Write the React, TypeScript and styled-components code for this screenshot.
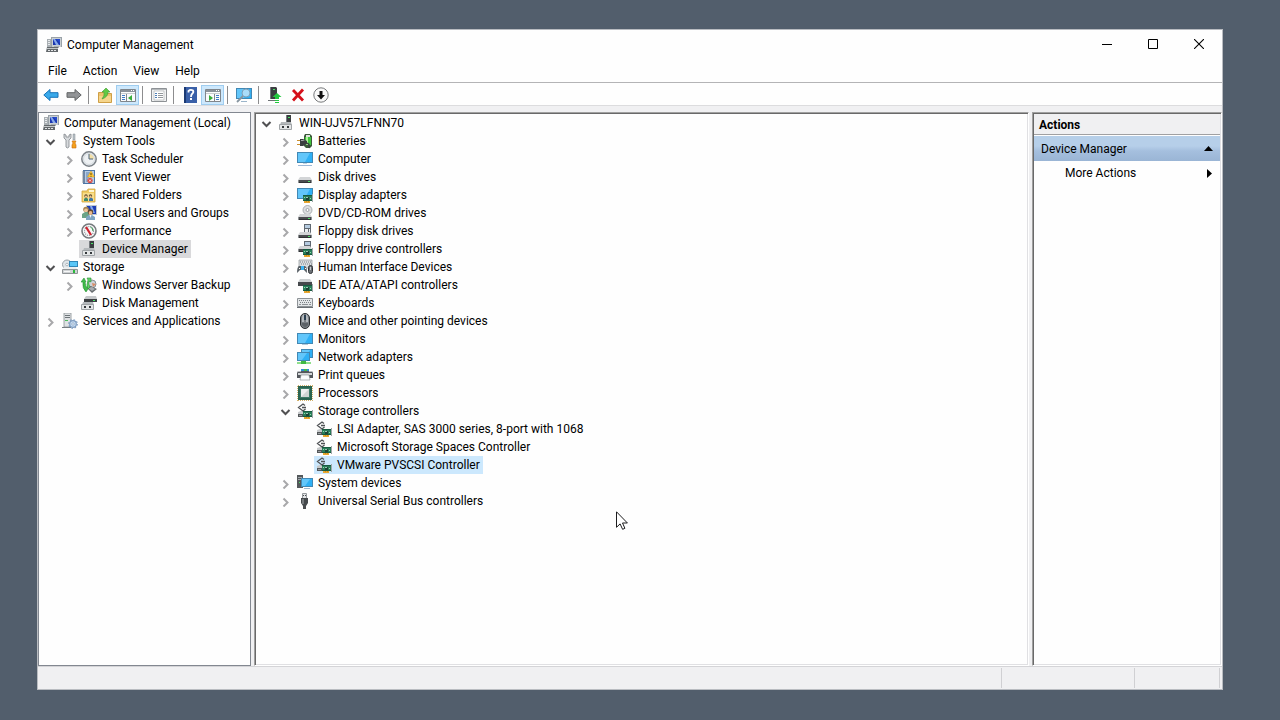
import React, { useState } from "react";
import styled, { createGlobalStyle, css } from "styled-components";

const GlobalStyle = createGlobalStyle`
  *, *::before, *::after { box-sizing: border-box; }
  body {
    margin: 0;
    background: #525e6c;
    color: #000;
    font: 12px/18px Roboto, "Open Sans", sans-serif;
  }
  button {
    margin: 0;
    padding: 0;
    border: 0;
    background: none;
    color: inherit;
    font: inherit;
  }
  ul { margin: 0; padding: 0; list-style: none; }
`;

const Desktop = styled.div`
  display: flex;
  min-height: 100vh;
  padding: 29px 57px 30px 37px;
`;

const Window = styled.main`
  flex: 1;
  min-width: 0;
  display: flex;
  flex-direction: column;
  background: #f0f0f2;
  border: 1px solid #b9bcc1;
`;

const TitleBar = styled.header`
  display: flex;
  align-items: center;
  height: 30px;
  padding-left: 8px;
  background: #fefefe;
`;

const Title = styled.h1`
  flex: 1;
  margin: 0 0 0 5px;
  font-size: 12px;
  font-weight: 400;
`;

const CaptionButton = styled.button`
  display: grid;
  place-items: center;
  width: 46px;
  height: 30px;
  padding-bottom: 2px;
`;

const MenuBar = styled.nav`
  display: flex;
  height: 23px;
  padding-left: 2px;
  background: #fefefe;
  border-bottom: 1px solid #b4b4b6;
`;

const MenuButton = styled.button`
  padding: 0 8px;
`;

const Toolbar = styled.div`
  display: flex;
  align-items: center;
  height: 23px;
  padding: 2px 0 0 1px;
  background: #fefefe;
  border-bottom: 1px solid #dcdcde;
`;

const ToolButton = styled.button<{ $pressed?: boolean }>`
  display: grid;
  place-items: center;
  width: 23px;
  height: 20px;
  ${(p) =>
    p.$pressed &&
    css`
      background: #cde8fc;
      box-shadow: inset 0 0 0 1px #9fcdf0;
    `}
`;

const ToolDivider = styled.span`
  width: 1px;
  height: 18px;
  margin: 0 4px 0 3px;
  background: #8c8c8e;
`;

const Panes = styled.div`
  flex: 1;
  display: grid;
  grid-template-columns: 213px minmax(0, 1fr) 190px;
  gap: 3px;
  padding-top: 6px;
`;

const ConsolePane = styled.nav`
  padding: 1px 2px;
  background: #fefefe;
  border: 1px solid #828790;
`;

const SunkenPane = styled.section`
  padding: 1px 2px 2px 2px;
  background: #fefefe;
  border: 1px solid;
  border-color: #a0a0a0 #fff #fff #a0a0a0;
  box-shadow: inset 1px 1px 0 #696969, inset -1px -1px 0 #e0e0e3;
`;

const ActionsPane = styled(SunkenPane).attrs({ as: "aside" })`
  padding: 1px;
`;

const Branch = styled.ul<{ $nested?: boolean }>`
  padding-left: ${(p) => (p.$nested ? 19 : 0)}px;
`;

const Row = styled.div`
  display: flex;
  height: 18px;
`;

const Expander = styled.button`
  display: grid;
  place-items: center;
  width: 19px;
  height: 18px;
`;

const ExpanderGap = styled.span`
  width: 19px;
`;

const NodeButton = styled.button<{ $tone?: "grey" | "blue" }>`
  display: flex;
  align-items: center;
  gap: 5px;
  padding: 0 3px 0 2px;
  white-space: nowrap;
  background: ${(p) =>
    p.$tone === "grey" ? "#d9d9db" : p.$tone === "blue" ? "#cce8fd" : "none"};
`;

const ActionsTitle = styled.h2`
  margin: 0;
  height: 21px;
  padding: 2px 5px 0;
  background: #f0f0f2;
  border-bottom: 1px solid #a0a0a2;
  font-size: 12px;
  line-height: 18px;
  font-weight: 700;
`;

const ActionButton = styled.button<{ $heading?: boolean }>`
  display: flex;
  align-items: center;
  justify-content: space-between;
  width: 100%;
  height: 24px;
  padding: 0 8px 0 31px;
  ${(p) =>
    p.$heading &&
    css`
      height: 25px;
      margin-top: 1px;
      padding: 0 7px;
      background: linear-gradient(#b6cfe9 0 40%, #a5bfde 60%, #9ab5d5);
    `}
`;

const StatusBar = styled.footer`
  display: flex;
  height: 23px;
  padding: 1px 2px 1px 0;
  border-top: 1px solid #d4d4d7;
`;

const StatusCell = styled.span<{ $width?: number }>`
  flex: ${(p) => (p.$width ? `0 0 ${p.$width}px` : 1)};
  border-right: 1px solid #d0d0d3;
`;

const Pointer = styled.svg`
  position: absolute;
  left: 616px;
  top: 511px;
  pointer-events: none;
`;

const Glyph = ({ children }: { children: React.ReactNode }) => (
  <svg width="16" height="16" viewBox="0 0 16 16" aria-hidden="true">
    {children}
  </svg>
);

/* Parts that several icons share */
const Card = () => (
  <>
    <path d="M6 8h9v6H6z" fill="#2a7d5a" />
    <path d="M6 8h9v1H6zM6 13h9v1H6z" fill="#175c40" />
    <path d="M9 10h3v3H9z" fill="#1c4436" />
    <path d="M9 10h2v1H9z" fill="#9cc9b4" />
    <path d="M7 10h1v1H7zM13 11h1v1h-1z" fill="#8fe0ab" />
    <path d="M15 7h1v8h-1z" fill="#a3a7aa" />
    <path d="M7 14h6v2H7z" fill="#e8a730" />
    <path d="M9 14h1v1H9zM11 14h1v1h-1z" fill="#c78a1c" />
  </>
);

const Drive = ({ y = 9 }: { y?: number }) => (
  <g transform={`translate(0 ${y})`}>
    <path d="M3 0h10l2 3H1z" fill="#d3d5d7" />
    <path d="M1 3h14v3H1z" fill="#4a4c4f" />
    <path d="M1 3h1v3H1zM14 3h1v3h-1z" fill="#8f9294" />
    <path d="M2 5h12v1H2z" fill="#303234" />
    <path d="M11 4h2v1h-2z" fill="#52e06a" />
  </g>
);

const Screen = ({ x, y, w, h }: { x: number; y: number; w: number; h: number }) => (
  <>
    <rect x={x} y={y} width={w} height={h} fill="#4288b4" />
    <rect x={x + 1} y={y + 1} width={w - 2} height={h - 2} fill="#2fb0f5" />
    <path d={`M${x + 1} ${y + 1}h${w - 4}l-5 ${h - 2}h${-(w - 9)}z`} fill="#62c6fa" />
  </>
);

const Floppy = ({ y }: { y: number }) => (
  <g transform={`translate(0 ${y})`}>
    <path d="M7 0h7v9H7z" fill="#5f6770" />
    <path d="M8 1h5v3H8z" fill="#b5cbe0" />
    <path d="M8 5h5v4H8z" fill="#eceff1" />
    <path d="M11 5h1v3h-1z" fill="#5f6770" />
  </g>
);

const icons = {
  management: (
    <>
      <path d="M5 0h11v10H5z" fill="#c9cfd3" />
      <path d="M5 0h11v1H5zM5 0h1v10H5zM15 0h1v10h-1z" fill="#9aa2a8" />
      <path d="M7 2h7v6H7z" fill="#1a37b0" />
      <path d="M7 2h2l4 6h-3z" fill="#86a8ea" />
      <path d="M10 2h4v4z" fill="#2449cc" />
      <path d="M1 2h4v8H1z" fill="#a9afb3" />
      <path d="M2 3h2v1H2zM2 5h2v1H2zM2 7h2v1H2z" fill="#e7eaec" />
      <path d="M8 9h5v2H8z" fill="#aab0b5" />
      <path d="M1 10h11v5H0z" fill="#63686b" />
      <path d="M1 11h11v1H1z" fill="#c3c7c9" />
      <path d="M2 13h2v1H2zM5 13h2v1H5zM8 13h2v1H8z" fill="#e3e5e6" />
    </>
  ),
  tools: (
    <>
      <path d="M2 1v4l2 2v7q1 2 3 0V7l2-2V1L7 2v2H4V2z" fill="#d7dadd" stroke="#82878c" strokeWidth=".8" />
      <path d="M11 1h2v6h-2z" fill="#bcc3c9" stroke="#838b91" strokeWidth=".5" />
      <path d="M10 8h4l-1 2 1 2v3h-4v-3l1-2z" fill="#f4a11e" stroke="#ca6a0a" strokeWidth=".6" />
    </>
  ),
  clock: (
    <>
      <circle cx="8" cy="8" r="7.200" fill="#eef1f3" stroke="#7b8187" strokeWidth="1.500" />
      <path d="M8 8V3a5 5 0 0 1 5 5z" fill="#f3dfa7" />
      <circle cx="8" cy="8" r="5.500" fill="none" stroke="#bfc8cf" strokeWidth=".6" />
      <path d="M8 3v5h4" fill="none" stroke="#4c6478" />
    </>
  ),
  event: (
    <>
      <path d="M2 1h12v14H2z" fill="#4d75a6" />
      <path d="M4 2h9v12H4z" fill="#b7cde6" />
      <path d="M5 4h4M5 6h3M5 8h3M5 10h2M5 12h2" stroke="#5f82ad" />
      <path d="M1 3h3M1 5h3M1 7h3M1 9h3M1 11h3M1 13h3" stroke="#93999f" />
      <path d="M10 2l3.500 6h-7z" fill="#ffc936" stroke="#d79a1c" strokeWidth=".5" />
      <path d="M9.500 4h1v2h-1zM9.500 6.700h1v1h-1z" fill="#5a430c" />
      <circle cx="9" cy="11.500" r="2.600" fill="#d9453c" />
      <path d="M8 10.500l2 2m0-2l-2 2" stroke="#fff" strokeWidth=".9" />
    </>
  ),
  shared: (
    <>
      <path d="M1 4h5l1-2h7v13H1z" fill="#f0cb63" stroke="#d0a540" strokeWidth=".8" />
      <path d="M8 3h5v2H8z" fill="#fff6d4" />
      <path d="M2 6h11v8H2z" fill="#f8dd8c" />
      <circle cx="5" cy="9" r="1.700" fill="#5d4a2a" />
      <circle cx="5" cy="9.600" r="1.100" fill="#f0c59a" />
      <path d="M3 14v-2l1-1h2l1 1v2z" fill="#3f8a6b" />
      <circle cx="9.500" cy="9" r="1.700" fill="#5d4a2a" />
      <circle cx="9.500" cy="9.600" r="1.100" fill="#f0c59a" />
      <path d="M8 14v-2l1-1h2l1 1v2z" fill="#3f78a8" />
    </>
  ),
  users: (
    <>
      <path d="M5 0h11v10H5z" fill="#c2c9ce" />
      <path d="M6 1h9v8H6z" fill="#1c3db4" />
      <path d="M9 1h2l3 7h-3z" fill="#86a8ea" />
      <circle cx="5" cy="4.500" r="2.800" fill="#a5834f" />
      <circle cx="5" cy="5.500" r="1.900" fill="#eec39a" />
      <path d="M1 13V9l3-2h3l2 3v3z" fill="#6ba387" />
      <circle cx="9.500" cy="7" r="2.700" fill="#63492d" />
      <circle cx="9.500" cy="8" r="1.900" fill="#e9b98d" />
      <path d="M5 15v-3l3-2h3l3 2v3z" fill="#7fa5c2" />
      <path d="M8.500 10h2l-1 3z" fill="#f1f5f7" />
    </>
  ),
  perf: (
    <>
      <circle cx="8" cy="8" r="7" fill="#f7f7f7" stroke="#75797d" strokeWidth="1.600" />
      <circle cx="8" cy="8" r="4.500" fill="none" stroke="#8b949a" strokeWidth="1.200" strokeDasharray="1 1" />
      <path d="M5 4l5 8" stroke="#cf2330" strokeWidth="2.200" />
      <path d="M9.500 4q2.500 1 2.500 4" stroke="#349b4d" fill="none" />
    </>
  ),
  device: (
    <>
      <path d="M8 0h5v9H8z" fill="#3a3d40" />
      <path d="M8 0h1v9H8z" fill="#777b7f" />
      <path d="M10 2h2v1h-2z" fill="#47e364" />
      <path d="M3 7h10l1 3H2z" fill="#b4b8bb" />
      <path d="M1.500 9.500h12v5h-12z" fill="#e4e6e7" stroke="#a0a4a7" />
      <path d="M4 11h2v2H4zM9 11h2v2H9z" fill="#33373a" />
    </>
  ),
  storage: (
    <>
      <circle cx="5" cy="5.500" r="4.500" fill="#dfe5e9" stroke="#98a1a7" />
      <circle cx="5" cy="5.500" r="1.300" fill="#fff" stroke="#8a949b" strokeWidth=".6" />
      <path d="M7 2h9v6H7z" fill="#2f86b8" />
      <path d="M8 3h7v4H8z" fill="#59c6f7" />
      <path d="M1 10l1-2h12l1 2z" fill="#eceeef" />
      <path d="M.5 10.500h15v4H.5z" fill="#d0d3d5" stroke="#8f9396" />
      <path d="M11 11h2v3h-2z" fill="#2bb83d" />
      <path d="M2 12h6v1H2z" fill="#f6f7f7" />
    </>
  ),
  backup: (
    <>
      <circle cx="11" cy="7" r="4" fill="#ccd3d7" stroke="#868e93" />
      <path d="M11 6l4 1-3 3z" fill="#d88b66" />
      <path d="M5 10l5-1 6 3-5 4z" fill="#686d70" />
      <path d="M7 11l4-1 3 2-3 2z" fill="#a8adb0" />
      <path d="M0 5l3-4 2 4H4q0 4 3 7l-2 3Q1 11 2 5z" fill="#3fbd4a" stroke="#2a8f35" strokeWidth=".6" />
      <path d="M6 1h4v4L8 4q-1 3 1 6l-2 2Q5 8 7 3z" fill="#5fd567" stroke="#2a8f35" strokeWidth=".6" />
    </>
  ),
  disk: (
    <>
      <path d="M5 1h10l1 3H3z" fill="#c5c8ca" />
      <path d="M3 4h13v3H3z" fill="#3c3f42" />
      <path d="M12 5h2v1h-2z" fill="#47e364" />
      <path d="M2 7h10l1 3H1z" fill="#b4b8bb" />
      <path d="M.5 9.500h12v5H.5z" fill="#e4e6e7" stroke="#a0a4a7" />
      <path d="M3 11h2v2H3zM8 11h2v2H8z" fill="#33373a" />
    </>
  ),
  services: (
    <>
      <path d="M2 0h7v14H2z" fill="#dfe2e4" stroke="#8c9296" strokeWidth=".8" />
      <path d="M3 2h5v1H3zM3 4h5v1H3z" fill="#6d7579" />
      <path d="M3 7h3v1H3z" fill="#4dbd5d" />
      <path d="M0 14h9v1H0z" fill="#767d82" />
      <circle cx="11" cy="11" r="3.300" fill="#c5daf0" stroke="#7f9dc0" strokeWidth="1.200" />
      <circle cx="11" cy="11" r="4.300" fill="none" stroke="#7f9dc0" strokeWidth="1.200" strokeDasharray="1.500 1.870" />
      <circle cx="11" cy="11" r="1.200" fill="#fff" stroke="#6d8fb6" strokeWidth=".6" />
    </>
  ),
  battery: (
    <>
      <path d="M8 1h5l2 2v10l-2 2H9l-2-2V3z" fill="#3c5a3a" />
      <path d="M9 2h4v2H9z" fill="#dfe3df" />
      <path d="M8 4h6v8H8z" fill="#3fc43c" />
      <path d="M9 4h2v8H9z" fill="#b2f29b" />
      <path d="M0 7h4v1H0zM0 11h4v1H0z" fill="#c98f2e" />
      <path d="M3 6h3l4 2v3l-4 2H3z" fill="#3b3e40" />
      <path d="M4 7h2l2 1H4z" fill="#a5a8aa" />
      <path d="M9 10q4 0 3 5" stroke="#3b3e40" strokeWidth="1.500" fill="none" />
    </>
  ),
  computer: (
    <>
      <Screen x={0} y={1} w={16} h={11} />
      <path d="M6 12h4v1H6z" fill="#bcd3e5" />
      <path d="M1 14h14v1H1z" fill="#9db8d7" />
    </>
  ),
  diskDrive: <Drive y={8} />,
  display: (
    <>
      <Screen x={0} y={1} w={16} h={11} />
      <Card />
    </>
  ),
  dvd: (
    <>
      <circle cx="10.500" cy="5" r="4.500" fill="#dcdee0" stroke="#a4a8ab" strokeWidth=".9" />
      <circle cx="10.500" cy="5" r="1.500" fill="#fff" stroke="#8d9195" strokeWidth=".8" />
      <Drive />
    </>
  ),
  floppy: (
    <>
      <Floppy y={1} />
      <Drive />
    </>
  ),
  floppyController: (
    <>
      <Floppy y={0} />
      <Drive y={5} />
      <Card />
    </>
  ),
  hid: (
    <>
      <path d="M2 1h13v8H2z" fill="#dadee1" stroke="#8f959a" strokeWidth=".7" />
      <path d="M3 3h11M4 5h11" stroke="#7a8187" strokeDasharray="1 1" />
      <path d="M0 14q0-6 2-7h6q2 1 2 7l-3-3H3z" fill="#596066" />
      <path d="M4 7h3v4H4z" fill="#3eb5f3" />
      <path d="M2 9h1v1H2zM8 9h1v1H8z" fill="#fff" />
      <rect x="11.500" y="6.500" width="4" height="8" rx="2" fill="#6b7075" stroke="#303336" />
      <path d="M13 8h1v3h-1z" fill="#c6cbd0" />
    </>
  ),
  ide: (
    <>
      <path d="M3 2h10l2 3H1z" fill="#cdd0d2" />
      <path d="M1 5h14v4H1z" fill="#46494c" />
      <Card />
    </>
  ),
  keyboard: (
    <>
      <path d="M.5 3.500h15v8H.5z" fill="#e3e6e8" stroke="#8d9296" />
      <path d="M2 5.500h12M3 7.500h11" stroke="#7a8085" strokeDasharray="1 1" />
      <path d="M0 12h16v1H0z" fill="#6b7075" />
      <path d="M2 9h2v1H2zM12 9h2v1h-2zM5 9h6v1H5z" fill="#8d9296" />
    </>
  ),
  mouse: (
    <>
      <rect x="3.500" y=".5" width="9" height="15" rx="4.500" fill="#7b8085" stroke="#2b2e31" />
      <path d="M5 5q0-3 2-4v8H5zM9 1q2 1 2 4v4H9z" fill="#b4b9bd" />
      <path d="M7 2h2v5H7z" fill="#2b3f50" />
      <path d="M5 10h6v2q-3 4-6 0z" fill="#5d6267" />
    </>
  ),
  monitor: (
    <>
      <Screen x={0} y={2} w={16} h={11} />
      <path d="M5 13h6v1H5z" fill="#b4c8d8" />
    </>
  ),
  network: (
    <>
      <Screen x={4} y={0} w={12} h={9} />
      <Screen x={0} y={3} w={13} h={9} />
      <path d="M5 12h3v1h6v2H0v-2h5z" fill="#8fe08a" />
      <path d="M4 12h5v3H4z" fill="#3fb843" />
    </>
  ),
  printer: (
    <>
      <path d="M4 2h8v4H4z" fill="#2e8cd0" />
      <path d="M7 2h3v3H7z" fill="#45b84e" />
      <path d="M1 4h14l1 2v5H0V6z" fill="#54585c" />
      <path d="M1 4h3v1H1zM12 4h3v1h-3z" fill="#b9bdc1" />
      <path d="M1 6h14v2H1z" fill="#d3d6d8" />
      <path d="M4 8h8l1 5H3z" fill="#fbfcfd" stroke="#84898d" strokeWidth=".6" />
    </>
  ),
  processor: (
    <>
      <path d="M1 .5h15M1 15.500h15" stroke="#d3b068" strokeDasharray="1 1" />
      <path d="M.5 1v15M15.500 1v15" stroke="#d3b068" strokeDasharray="1 1" />
      <path d="M1 1h14v14H1z" fill="#2a6450" />
      <path d="M3 3h10v10H3z" fill="#3d7a66" />
      <path d="M4 4h8v8H4z" fill="#d0d6d3" />
      <path d="M4 4h8l-8 8z" fill="#eef0ef" />
    </>
  ),
  controller: (
    <>
      <path d="M1 9l3-1h5v3H1z" fill="#c6c9cb" />
      <path d="M1 11h6v3H1z" fill="#54585a" />
      <path d="M2 12h3v1H2z" fill="#9a9ea0" />
      <path d="M8 2.500L6 1 1.500 4.500 6 8l2.500-2M5 4.500h4" fill="none" stroke="#505356" strokeWidth="1.300" />
      <Card />
    </>
  ),
  system: (
    <>
      <path d="M0 0h6v13H0z" fill="#54585b" />
      <path d="M1 2h4v1H1zM1 4h4v1H1z" fill="#a1a8ad" />
      <path d="M2 7h1v1H2z" fill="#48e265" />
      <Screen x={4} y={3} w={12} h={9} />
      <path d="M7 13h6v1H7z" fill="#9fb9d0" />
    </>
  ),
  usb: (
    <>
      <path d="M5.500 .5h4v5h-4z" fill="#e2e4e6" stroke="#94989b" />
      <path d="M6 2h1v1H6zM8 2h1v1H8z" fill="#45494d" />
      <path d="M4 5h7v5l-2 3H6l-2-3z" fill="#45494c" />
      <path d="M5 6h2v5H5z" fill="#777b7e" />
      <path d="M6 13h3v3H6z" fill="#4a4d50" />
    </>
  ),
  back: (
    <path d="M.8 8 7 2.500v3.200h8v4.600H7v3.200z" fill="#39a9ea" stroke="#1873b8" />
  ),
  forward: (
    <path d="M15.200 8 9 2.500v3.200H1v4.600h8v3.200z" fill="#929497" stroke="#626466" />
  ),
  folderUp: (
    <>
      <path d="M1.500 5.500h5l1 1h7v9h-13z" fill="#edc46e" stroke="#cf9f45" />
      <path d="M2 9h12v6H2z" fill="#f5d58c" />
      <path d="M9 1l4 4h-2q0 5-6 7 3-4 2-7H5z" fill="#5fc944" stroke="#3a9a30" strokeWidth=".6" />
    </>
  ),
  consoleTree: (
    <>
      <path d="M.5 2.500h15v12H.5z" fill="#fafbfc" stroke="#80868c" />
      <path d="M1 3h14v2H1z" fill="#8a929a" />
      <path d="M11 3h1v1h-1zM13 3h1v1h-1z" fill="#fff" />
      <path d="M1 6h14v1H1z" fill="#c9cdd1" />
      <path d="M6 7h1v7H6z" fill="#80868c" />
      <path d="M2 8h3v1H2zM2 10h3v1H2zM2 12h3v1H2z" fill="#3d7bc8" />
      <path d="M12 8v6l-4-3z" fill="#37ad3b" />
    </>
  ),
  properties: (
    <>
      <path d="M.5 1.500h15v13H.5z" fill="#f1f2f3" stroke="#8d9195" />
      <path d="M1 2h14v1H1z" fill="#b6babd" />
      <path d="M3 4h10v9H3z" fill="#fff" stroke="#a6aaad" strokeWidth=".6" />
      <path d="M4 6h2v1H4zM4 8h2v1H4zM4 10h2v1H4z" fill="#4c7fb8" />
      <path d="M7 6h5v1H7zM7 8h5v1H7zM7 10h5v1H7z" fill="#92979b" />
    </>
  ),
  help: (
    <>
      <path d="M2 0h13v16H2z" fill="#3a60a8" />
      <path d="M2 0h2v16H2z" fill="#1b3a74" />
      <path d="M6.500 5.500V4Q8.500 2 11 3.500q1 2-1 3.500Q9 8 9 10" fill="none" stroke="#fff" strokeWidth="1.800" />
      <path d="M8 11h2v2H8z" fill="#fff" />
    </>
  ),
  actionPane: (
    <>
      <path d="M.5 2.500h15v12H.5z" fill="#fafbfc" stroke="#80868c" />
      <path d="M1 3h14v2H1z" fill="#8a929a" />
      <path d="M11 3h1v1h-1zM13 3h1v1h-1z" fill="#fff" />
      <path d="M1 6h14v1H1z" fill="#c9cdd1" />
      <path d="M9 7h1v7H9z" fill="#80868c" />
      <path d="M11 8h3v1h-3zM11 10h3v1h-3zM11 12h3v1h-3z" fill="#3d7bc8" />
      <path d="M4 8v6l4-3z" fill="#37ad3b" />
    </>
  ),
  scan: (
    <>
      <Screen x={0} y={1} w={16} h={11} />
      <path d="M5 14h6v1H5z" fill="#9bb5ca" />
      <circle cx="10" cy="6" r="4" fill="#a9dcf9" stroke="#7d9fb8" />
      <path d="M7 9l-6 6" stroke="#8795a0" strokeWidth="1.800" />
    </>
  ),
  update: (
    <>
      <path d="M3 0h6l1 1v11H3z" fill="#3c3f42" />
      <path d="M3 0h1v12H3z" fill="#75797d" />
      <path d="M6 2h2v1H6z" fill="#48e265" />
      <path d="M1 13h8v1H1z" fill="#6f7376" />
      <path d="M10 6l4.500 4H12v2H8v-2H5.500zM8 13h4v1H8zM8 15h4v1H8z" fill="#25c840" />
    </>
  ),
  remove: <path d="M3 3l10 10.500M13 2.500L3 13.500" stroke="#d5101a" strokeWidth="2.800" />,
  disable: (
    <>
      <circle cx="8" cy="8" r="7.200" fill="#f9f9f9" stroke="#77797b" />
      <path d="M6.500 4h3v4H12l-4 4.500L4 8h2.500z" fill="#111" />
    </>
  ),
};

type IconName = keyof typeof icons;

interface TreeNode {
  label: string;
  icon: IconName;
  closed?: boolean;
  fixed?: boolean;
  tone?: "grey" | "blue";
  children?: TreeNode[];
}

const consoleTree: TreeNode = {
  label: "Computer Management (Local)",
  icon: "management",
  fixed: true,
  children: [
    {
      label: "System Tools",
      icon: "tools",
      children: [
        { label: "Task Scheduler", icon: "clock", closed: true },
        { label: "Event Viewer", icon: "event", closed: true },
        { label: "Shared Folders", icon: "shared", closed: true },
        { label: "Local Users and Groups", icon: "users", closed: true },
        { label: "Performance", icon: "perf", closed: true },
        { label: "Device Manager", icon: "device", tone: "grey" },
      ],
    },
    {
      label: "Storage",
      icon: "storage",
      children: [
        { label: "Windows Server Backup", icon: "backup", closed: true },
        { label: "Disk Management", icon: "disk" },
      ],
    },
    { label: "Services and Applications", icon: "services", closed: true },
  ],
};

const deviceTree: TreeNode = {
  label: "WIN-UJV57LFNN70",
  icon: "device",
  children: [
    { label: "Batteries", icon: "battery", closed: true },
    { label: "Computer", icon: "computer", closed: true },
    { label: "Disk drives", icon: "diskDrive", closed: true },
    { label: "Display adapters", icon: "display", closed: true },
    { label: "DVD/CD-ROM drives", icon: "dvd", closed: true },
    { label: "Floppy disk drives", icon: "floppy", closed: true },
    { label: "Floppy drive controllers", icon: "floppyController", closed: true },
    { label: "Human Interface Devices", icon: "hid", closed: true },
    { label: "IDE ATA/ATAPI controllers", icon: "ide", closed: true },
    { label: "Keyboards", icon: "keyboard", closed: true },
    { label: "Mice and other pointing devices", icon: "mouse", closed: true },
    { label: "Monitors", icon: "monitor", closed: true },
    { label: "Network adapters", icon: "network", closed: true },
    { label: "Print queues", icon: "printer", closed: true },
    { label: "Processors", icon: "processor", closed: true },
    {
      label: "Storage controllers",
      icon: "controller",
      children: [
        { label: "LSI Adapter, SAS 3000 series, 8-port with 1068", icon: "controller" },
        { label: "Microsoft Storage Spaces Controller", icon: "controller" },
        { label: "VMware PVSCSI Controller", icon: "controller", tone: "blue" },
      ],
    },
    { label: "System devices", icon: "system", closed: true },
    { label: "Universal Serial Bus controllers", icon: "usb", closed: true },
  ],
};

function TreeItem({ node }: { node: TreeNode }) {
  const [open, setOpen] = useState(!node.closed);
  const expandable = node.closed || !!node.children;
  return (
    <li>
      <Row>
        {node.fixed ? null : expandable ? (
          <Expander
            aria-label={`${open ? "Collapse" : "Expand"} ${node.label}`}
            aria-expanded={open}
            onClick={() => setOpen(!open)}
          >
            <svg width="11" height="11" viewBox="0 0 11 11" aria-hidden="true">
              {open ? (
                <path d="M1.500 4l4 4 4-4" fill="none" stroke="#505052" strokeWidth="2" />
              ) : (
                <path d="M3.500 2.500l4 4-4 4" fill="none" stroke="#a8a8aa" strokeWidth="2" />
              )}
            </svg>
          </Expander>
        ) : (
          <ExpanderGap />
        )}
        <NodeButton $tone={node.tone}>
          <Glyph>{icons[node.icon]}</Glyph>
          {node.label}
        </NodeButton>
      </Row>
      {open && node.children && (
        <Branch $nested={!node.fixed}>
          {node.children.map((child) => (
            <TreeItem key={child.label} node={child} />
          ))}
        </Branch>
      )}
    </li>
  );
}

const toolGroups: { icon: IconName; label: string; pressed?: boolean }[][] = [
  [
    { icon: "back", label: "Back" },
    { icon: "forward", label: "Forward" },
  ],
  [
    { icon: "folderUp", label: "Up one level" },
    { icon: "consoleTree", label: "Show or hide console tree", pressed: true },
  ],
  [{ icon: "properties", label: "Properties" }],
  [
    { icon: "help", label: "Help topics" },
    { icon: "actionPane", label: "Show or hide action pane", pressed: true },
  ],
  [{ icon: "scan", label: "Scan for hardware changes" }],
  [
    { icon: "update", label: "Update driver" },
    { icon: "remove", label: "Uninstall device" },
    { icon: "disable", label: "Disable device" },
  ],
];

export default function App() {
  return (
    <>
      <GlobalStyle />
      <Desktop>
        <Window>
          <TitleBar>
            <Glyph>{icons.management}</Glyph>
            <Title>Computer Management</Title>
            <CaptionButton aria-label="Minimize">
              <svg width="10" height="10" stroke="#000">
                <path d="M0 5.500h10" />
              </svg>
            </CaptionButton>
            <CaptionButton aria-label="Maximize">
              <svg width="10" height="10" stroke="#000" fill="none">
                <path d="M.5 .5h9v9h-9z" />
              </svg>
            </CaptionButton>
            <CaptionButton aria-label="Close">
              <svg width="10" height="10" stroke="#000">
                <path d="M0 0l10 10M10 0L0 10" strokeWidth="1.100" />
              </svg>
            </CaptionButton>
          </TitleBar>
          <MenuBar aria-label="Menu">
            {["File", "Action", "View", "Help"].map((name) => (
              <MenuButton key={name}>{name}</MenuButton>
            ))}
          </MenuBar>
          <Toolbar role="toolbar" aria-label="Tools">
            {toolGroups.map((group, index) => (
              <React.Fragment key={group[0].icon}>
                {index > 0 && <ToolDivider />}
                {group.map((tool) => (
                  <ToolButton key={tool.icon} aria-label={tool.label} $pressed={tool.pressed}>
                    <Glyph>{icons[tool.icon]}</Glyph>
                  </ToolButton>
                ))}
              </React.Fragment>
            ))}
          </Toolbar>
          <Panes>
            <ConsolePane aria-label="Console tree">
              <Branch>
                <TreeItem node={consoleTree} />
              </Branch>
            </ConsolePane>
            <SunkenPane aria-label="Devices">
              <Branch>
                <TreeItem node={deviceTree} />
              </Branch>
            </SunkenPane>
            <ActionsPane>
              <ActionsTitle>Actions</ActionsTitle>
              <ActionButton $heading>
                Device Manager
                <svg width="9" height="5" aria-hidden="true">
                  <path d="M0 5l4.500-5L9 5z" />
                </svg>
              </ActionButton>
              <ActionButton>
                More Actions
                <svg width="6" height="9" aria-hidden="true">
                  <path d="M1 0l5 4.500L1 9z" />
                </svg>
              </ActionButton>
            </ActionsPane>
          </Panes>
          <StatusBar>
            <StatusCell />
            <StatusCell $width={133} />
            <StatusCell $width={85} />
          </StatusBar>
        </Window>
      </Desktop>
      <Pointer width="12" height="19" viewBox="0 0 12 19" aria-hidden="true">
        <path
          d="M.5 .8v15.500l3.600-3.400 2.500 5.400 2.300-1-2.400-5.300h4.900z"
          fill="#fff"
          stroke="#1c1c1e"
        />
      </Pointer>
    </>
  );
}
